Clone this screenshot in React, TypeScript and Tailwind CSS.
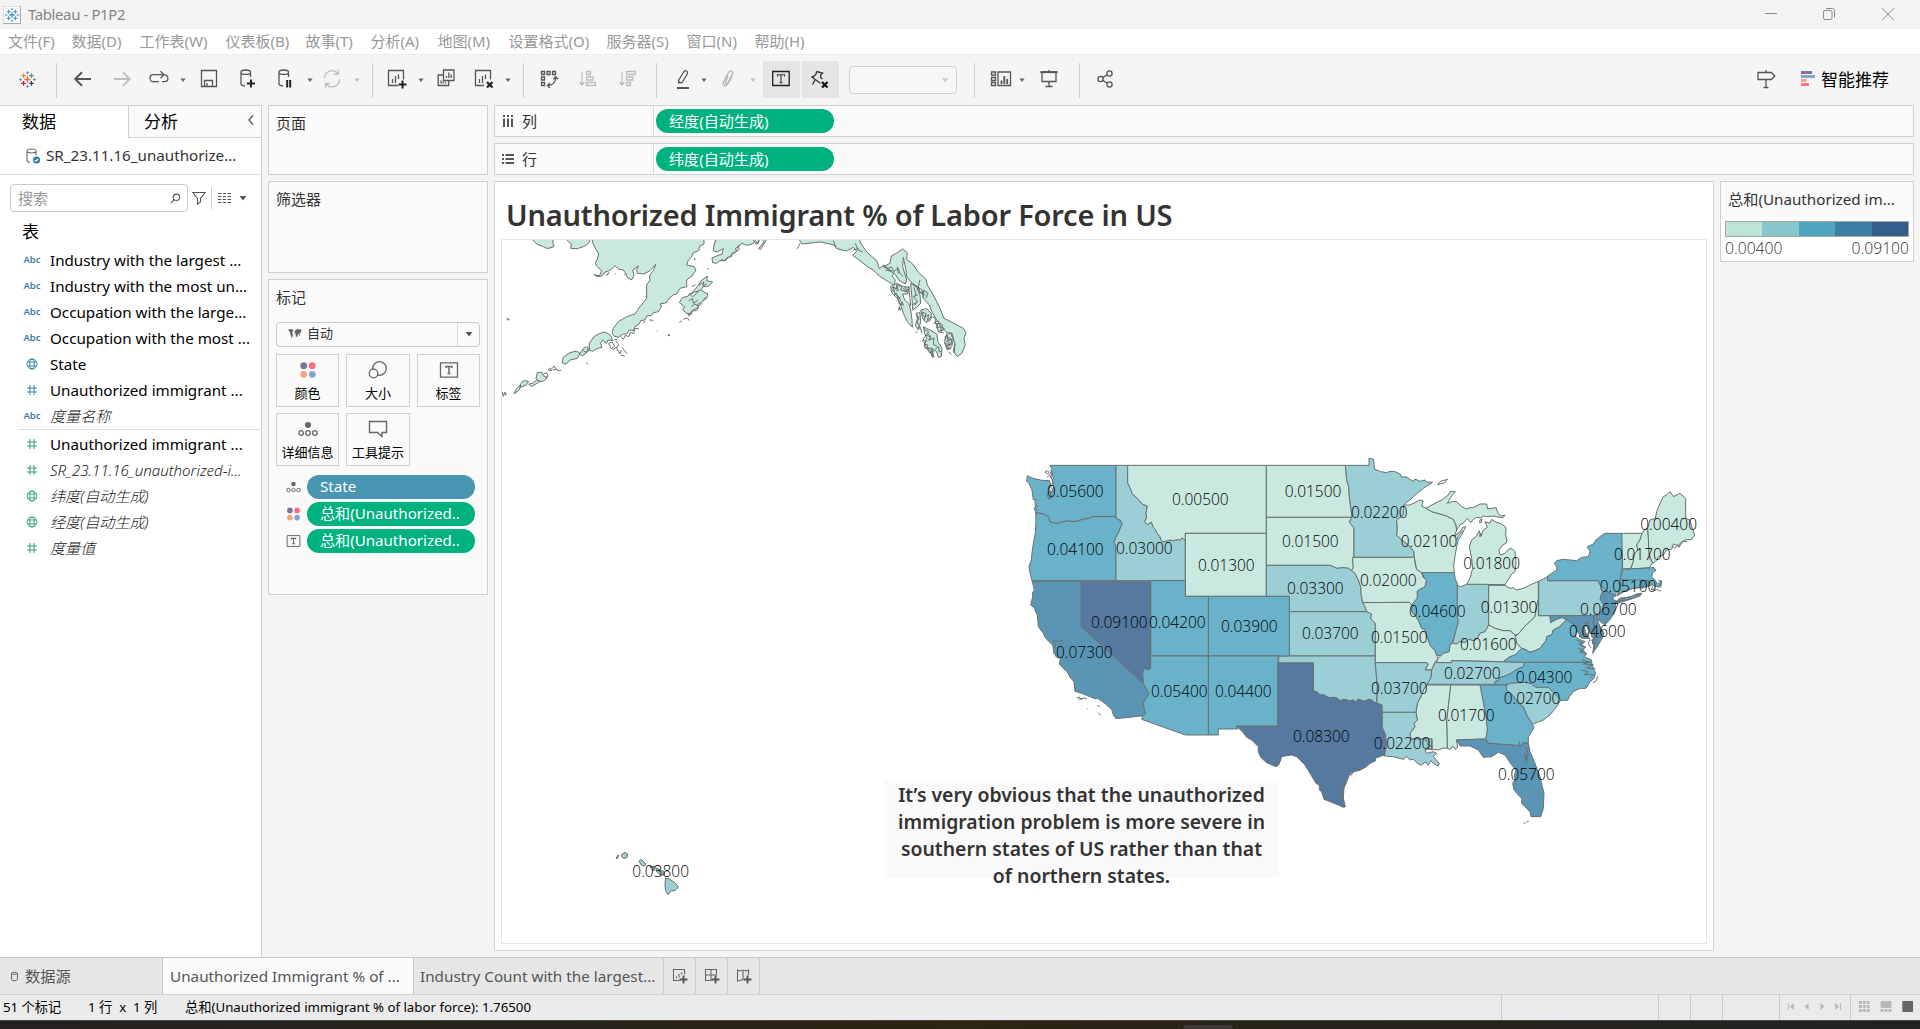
import React from "react";

type P = { children?: React.ReactNode; className?: string };

const Ico = ({ children, className = "" }: P) => (
  <svg viewBox="0 0 28 28" fill="none" stroke="#555" strokeWidth="1.3" className={"mb-0.5 h-7 w-7 shrink-0 " + className}>
    {children}
  </svg>
);

const Caret = ({ className = "" }: P) => (
  <svg viewBox="0 0 10 10" className={"h-2.5 w-2.5 shrink-0 " + className}>
    <path d="M2.4 3.5h5.2L5 7z" fill="currentColor" />
  </svg>
);

const Sep = ({ className = "" }: P) => <div className={"h-[35px] w-px shrink-0 bg-[#d0d0d0] " + className} />;

const Cylinder = () => (
  <path d="M17.5 12V7.2c0-1.2-2-2.2-4.8-2.2S8 6 8 7.2v11.6c0 1.2 1.6 2 4 2.2M8 7.4c0 1.2 2 2 4.7 2s4.8-.8 4.8-2" />
);

const menus: [string, string][] = [
  ["文件(F)", "w-[63.5px]"],
  ["数据(D)", "w-[68px]"],
  ["工作表(W)", "w-[86px]"],
  ["仪表板(B)", "w-[80px]"],
  ["故事(T)", "w-[65px]"],
  ["分析(A)", "w-[67px]"],
  ["地图(M)", "w-[71px]"],
  ["设置格式(O)", "w-[98px]"],
  ["服务器(S)", "w-[80px]"],
  ["窗口(N)", "w-[68px]"],
  ["帮助(H)", "w-[70px]"],
];

const TableauMark = ({ colors, className = "" }: { colors: string[]; className?: string }) => (
  <svg viewBox="0 0 24 24" fill="none" className={className}>
    <path d="M12 8v8M8 12h8" stroke={colors[0]} strokeWidth="1.9" />
    <path d="M7 4v6M4 7h6" stroke={colors[1]} strokeWidth="1.6" />
    <path d="M17 4v6M14 7h6" stroke={colors[2]} strokeWidth="1.6" />
    <path d="M7 14v6M4 17h6" stroke={colors[3]} strokeWidth="1.6" />
    <path d="M17 14v6M14 17h6" stroke={colors[4]} strokeWidth="1.6" />
    <path d="M12 1.2v4M10 3.2h4M12 18.8v4M10 20.8h4" stroke={colors[5]} strokeWidth="1.2" />
    <path d="M3.2 10v4M1.2 12h4M20.8 10v4M18.8 12h4" stroke={colors[6]} strokeWidth="1.2" />
  </svg>
);

function TitleBar() {
  return (
    <div className="flex h-[29px] shrink-0 items-center bg-[#f3f3f3] pl-[3px]">
      <div className="flex h-[18px] w-[18px] items-center justify-center border border-[#ddd] border-r-[#aaa] border-b-[#aaa] bg-[#f7fafc]">
        <TableauMark colors={["#4a90b8", "#4a90b8", "#4a90b8", "#4a90b8", "#4a90b8", "#5fa0c4", "#5fa0c4"]} className="h-4 w-4" />
      </div>
      <span className="ml-[7px] text-[15px] tracking-[-0.4px] text-[#858585]">Tableau - P1P2</span>
      <svg viewBox="0 0 156 29" fill="none" stroke="#8a8a8a" className="ml-auto h-[29px] w-[156px]">
        <path d="M1 13.5h12" />
        <rect x="59.5" y="10.5" width="8.5" height="9" rx="1.5" />
        <path d="M62 8.5h6.5a2 2 0 0 1 2 2v7" />
        <path d="M118 8.3l12 12M130 8.3l-12 12" />
      </svg>
    </div>
  );
}

function Toolbar() {
  return (
    <div className="flex h-[51px] shrink-0 items-center border-t border-[#ececec] bg-[#f5f5f5] pl-[13px] text-[#666]">
      <div className="mb-0.5 flex h-7 w-7 shrink-0 items-center justify-center">
        <TableauMark colors={["#e8762d", "#eb912c", "#5b879b", "#c72035", "#1f447e", "#7199a6", "#7099a6"]} className="h-[19px] w-[19px]" />
      </div>
      <Sep className="ml-[15px]" />
      <Ico className="ml-3"><path d="M22 14H6.500M13 7.200L6.200 14l6.800 6.800" strokeWidth="2" /></Ico>
      <Ico className="ml-[11px]"><path d="M6 14h15.500M15 7.200l6.800 6.800-6.800 6.800" stroke="#bdbdbd" strokeWidth="1.8" /></Ico>
      <Ico className="ml-[9px]"><path d="M14 16.700H8.500a3.500 3.500 0 0 1-3.500-3.500v-.7A3.500 3.500 0 0 1 8.500 9.700H18M15.500 6.200l3.500 3.500-3.500 3.500M17 16.700h2.500a3.400 3.400 0 0 0 0-6.800" /></Ico>
      <Caret className="ml-[5px]" />
      <Ico className="ml-[7px]"><path d="M6.500 5.500h15v16h-15zM9.500 21.500v-6h8v6M12 21v-3" /></Ico>
      <Ico className="ml-[10px]"><Cylinder /><path d="M18 14.500v8M14 18.500h8" stroke="#222" strokeWidth="2" /></Ico>
      <Ico className="ml-[10px]"><Cylinder /><path d="M16.200 15v7.500M19.200 15v7.500" stroke="#222" strokeWidth="2" /></Ico>
      <Caret className="ml-[6px]" />
      <Ico className="ml-[3px]"><path d="M6.500 13a7.600 7.600 0 0 1 13.500-4.500M21.500 14A7.600 7.600 0 0 1 8 19M20.500 4.500v4.500h-4.500M7.500 23v-4.500H12" stroke="#bdbdbd" /></Ico>
      <Caret className="ml-[6px] text-[#bbb]" />
      <Sep className="ml-[10px]" />
      <Ico className="ml-[10px]"><path d="M15 20.500H5.500v-15h15v9M9.500 18v-4M12.500 18v-7M15.500 14V9.500" /><path d="M19.500 15.500v8M15.500 19.500h8" stroke="#222" strokeWidth="2" /></Ico>
      <Caret className="ml-[5px]" />
      <Ico className="ml-[6px]"><path d="M11.500 5h10.500v10.500H11.500zM11.500 10H6.200v10.500h10.500V15.500M14.500 13v-2M16.800 13V7.500M19.200 13V9.500M9 18.500v-3M11.200 18.500v-2M13.500 18.500v-1.500" /></Ico>
      <Ico className="ml-[10px]"><path d="M14 20.500H5.500v-15h15v9M9.500 18v-4M12.500 18v-7M15.500 14V9.500" /><path d="M17 17l5.500 5.500M22.500 17L17 22.500" stroke="#222" strokeWidth="2.200" /></Ico>
      <Caret className="ml-[5px]" />
      <Sep className="ml-[10px]" />
      <Ico className="ml-[11px]"><path d="M6.500 6.500h3v3h-3zM12 6.500h3v3h-3zM17.500 6.500h3v3h-3zM6.500 12h3v3h-3zM6.500 17.500h3v3h-3zM12.500 20.500c5 0 8.200-3 8.200-8M18.300 14.200l2.400-2.400 2.300 2.400M15 18l-2.500 2.500 2.500 2.500" /></Ico>
      <Ico className="ml-[11px]"><path d="M8 7v12.500M5.500 17l2.500 3 2.500-3M12.500 6.500h4v3h-4zM12.500 12h6.500v3h-6.500zM12.500 17.500h9v3h-9z" stroke="#bdbdbd" /></Ico>
      <Ico className="ml-3"><path d="M8 7v12.500M5.500 17l2.500 3 2.500-3M12.500 6.500h9v3h-9zM12.500 12h6.500v3h-6.500zM12.500 17.500h4v3h-4z" stroke="#bdbdbd" /></Ico>
      <Sep className="ml-[14px]" />
      <Ico className="ml-3"><path d="M9.500 15.500L15 6.500q1-1.300 2.500-.5t1 2.500l-5.500 9-2 .5zM9 18.500l1-1.500" /><path d="M8 23h12" strokeWidth="2" /></Ico>
      <Caret className="ml-0.5" />
      <Ico className="ml-[6px]"><path d="M13 11l-2.500 6c-.6 2 1.600 2.500 2.300 1L17.500 9c1-3-2.500-4.500-4-1.500L8.500 17c-1.400 3 2.300 5.300 4.300 2L17 12" stroke="#b5b5b5" strokeWidth="1.300" /></Ico>
      <Caret className="ml-[5px] text-[#bbb]" />
      <div className="mb-px ml-[5px] flex h-[37px] w-[37px] shrink-0 items-center justify-center bg-[#e5e5e5]">
        <Ico className="mr-0.5"><path d="M5.700 6.500h16.500v14H5.700z" stroke="#222" /><path d="M10.500 11.500v-1.700h7v1.700M14 9.800v8M12.500 17.800h3" stroke="#333" strokeWidth="1.100" /></Ico>
      </div>
      <div className="mb-px ml-0.5 flex h-[37px] w-[37px] shrink-0 items-center justify-center bg-[#e5e5e5]">
        <Ico className="mr-px"><path d="M10.500 6.500l6 1.500-1.500 1.500-.5 3 2 1.500M10.500 6.500l-.3 2.200-3 3.300-1.800-.3 9 6.500M9 15l-2.500 4.500" stroke="#333" /><path d="M16 17l5.500 5.500M21.500 17L16 22.500" stroke="#111" strokeWidth="2.200" /></Ico>
      </div>
      <div className="ml-[10px] flex h-7 w-[108px] shrink-0 items-center justify-end rounded-sm border border-[#d0d0d0] bg-[#f7f7f7] pr-1.5">
        <Caret className="scale-125 text-[#c8c8c8]" />
      </div>
      <Sep className="ml-[17px]" />
      <Ico className="ml-3"><path d="M4.500 7h4v3h-4zM4.500 12.500h4v3h-4zM4.500 17.500h4v3h-4zM11 7h12.500v13.500H11z" /><path d="M14.500 19v-3.500M17.300 19v-8M20.200 19v-5" strokeWidth="1.800" /></Ico>
      <Caret className="ml-0.5" />
      <Ico className="ml-2"><path d="M5.500 7h17M14 5v1.500M7 7v9.500h14V7M14 16.500v5M10.500 21.500h7" /><path d="M5.500 7.200h17" strokeWidth="1.800" /></Ico>
      <Sep className="ml-4" />
      <Ico className="ml-[11px]"><circle cx="9.500" cy="14" r="2.600" /><circle cx="18.500" cy="8.500" r="2.600" /><circle cx="18.500" cy="19.500" r="2.600" /><path d="M11.700 12.600l4.600-2.800M11.700 15.400l4.600 2.800" /></Ico>
      <Ico className="ml-auto"><path d="M14 5v2M6 7.500h13.500l3.300 3.500-3.300 3.500H6zM14 14.500v8M11.500 22.500h5" /></Ico>
      <svg viewBox="0 0 14 16" className="mb-0.5 ml-[21px] h-4 w-[14px] shrink-0">
        <path d="M0 0h11v3H0z" fill="#84709b" />
        <path d="M0 4h14v3H0z" fill="#7fa5d0" />
        <path d="M0 8h5.500v3H0z" fill="#f5a57a" />
        <path d="M0 12h8v3H0z" fill="#fb7182" />
      </svg>
      <span className="mr-[31px] ml-[6px] text-[17px] text-black">智能推荐</span>
    </div>
  );
}

const Abc = () => <span className="text-[9.5px] font-semibold text-[#3d7f9f]">Abc</span>;
const Globe = ({ className = "" }: P) => (
  <svg viewBox="0 0 12 12" fill="none" stroke="currentColor" className={"h-3 w-3 " + className}>
    <circle cx="6" cy="6" r="5" />
    <ellipse cx="6" cy="6" rx="2.300" ry="5" />
    <path d="M1.500 4h9M1.500 8h9" />
  </svg>
);
const Hash = ({ className = "" }: P) => (
  <svg viewBox="0 0 12 12" fill="none" stroke="currentColor" strokeWidth="1.100" className={"h-3 w-3 " + className}>
    <path d="M4 1v10M8 1v10M1 4h10M1 8h10" />
  </svg>
);

const Field = ({ icon, label, italic = false }: { icon: React.ReactNode; label: string; italic?: boolean }) => (
  <div className="flex h-[26px] items-center whitespace-nowrap">
    <div className="flex w-16 shrink-0 justify-center">
      <div className="flex w-6 justify-center">{icon}</div>
    </div>
    <span className={"-ml-[14px] " + (italic ? "text-[15.100px] font-light text-[#222] italic" : "text-[15.200px] text-black")}>{label}</span>
  </div>
);

function DataPane() {
  const blue = "text-[#3d86a5]";
  const green = "text-[#3aa57e]";
  return (
    <div className="flex w-[262px] shrink-0 flex-col border-t border-r border-[#d0d0d0] bg-white">
      <div className="flex h-8 text-[17px] text-black">
        <div className="flex w-32 items-center pl-[22px]">数据</div>
        <div className="flex flex-1 items-center border-b border-l border-[#d0d0d0] bg-[#fafafa] pl-[15px]">
          分析
          <svg viewBox="0 0 8 12" fill="none" stroke="#555" strokeWidth="1.300" className="mr-[6px] mb-1 ml-auto h-3 w-2">
            <path d="M6 1.500L2 6l4 4.500" />
          </svg>
        </div>
      </div>
      <div className="flex h-[37px] items-center border-b border-[#ddd] pb-px pl-[24px]">
        <svg viewBox="0 0 18 18" fill="none" stroke="#666" strokeWidth="1.100" className="h-[18px] w-[18px]">
          <path d="M12 8V4c0-1-2-2-4.500-2S3 3 3 4v9.500c0 1 1 1.700 3 2M3 4.300c0 1 2 1.700 4.500 1.700S12 5.300 12 4.300" />
          <circle cx="12.500" cy="13" r="3.600" fill="#2f7ba6" stroke="none" />
          <path d="M10.800 13l1.300 1.300 2.200-2.400" stroke="white" />
        </svg>
        <span className="ml-1 text-[15.200px] whitespace-nowrap text-[#333]">SR_23.11.16_unauthorize...</span>
      </div>
      <div className="mt-[9px] flex h-[28px] items-center pl-[10px]">
        <div className="flex h-[28px] w-[178px] items-center rounded-sm border border-[#c8c8c8] pl-[7px] text-[15px] text-[#999]">
          搜索
          <svg viewBox="0 0 12 12" fill="none" stroke="#555" strokeWidth="1.200" className="mr-[6px] ml-auto h-[11px] w-[11px]">
            <circle cx="7" cy="4.700" r="3.500" />
            <path d="M4.500 7.200L1 11" />
          </svg>
        </div>
        <svg viewBox="0 0 14 14" fill="none" stroke="#555" strokeWidth="1.100" className="ml-[4px] h-[14px] w-[14px]">
          <path d="M.8 1.500h12.400L8.500 7.500v3.500l-3 2v-5.500z" />
        </svg>
        <div className="ml-[5px] h-[22px] w-px bg-[#d0d0d0]" />
        <svg viewBox="0 0 13 12" className="ml-[6px] h-3 w-[13px]" stroke="#555" strokeWidth="1.200">
          <path d="M0 1.500h3.500M5 1.500h3M9.500 1.500h3.500M0 4.500h3.500M5 4.500h3M9.500 4.500h3.500M0 7.500h3.500M5 7.500h3M9.500 7.500h3.500M0 10.500h3.500M5 10.500h3M9.500 10.500h3.500" />
        </svg>
        <Caret className="ml-[7px] scale-[1.300] text-[#555]" />
      </div>
      <div className="mt-[5px] flex h-[30px] items-center pb-px pl-[22px] text-[17px] text-black">表</div>
      <Field icon={<Abc />} label="Industry with the largest ..." />
      <Field icon={<Abc />} label="Industry with the most un..." />
      <Field icon={<Abc />} label="Occupation with the large..." />
      <Field icon={<Abc />} label="Occupation with the most ..." />
      <Field icon={<Globe className={blue} />} label="State" />
      <Field icon={<Hash className={blue} />} label="Unauthorized immigrant ..." />
      <Field icon={<Abc />} label="度量名称" italic />
      <div className="ml-[18px] h-px shrink-0 bg-[#ddd]" />
      <div className="mt-[1px] flex flex-col">
        <Field icon={<Hash className={green} />} label="Unauthorized immigrant ..." />
        <Field icon={<Hash className={green} />} label="SR_23.11.16_unauthorized-i..." italic />
        <Field icon={<Globe className={green} />} label="纬度(自动生成)" italic />
        <Field icon={<Globe className={green} />} label="经度(自动生成)" italic />
        <Field icon={<Hash className={green} />} label="度量值" italic />
      </div>
    </div>
  );
}

const Dots = () => (
  <svg viewBox="0 0 18 18" className="h-full w-full">
    <circle cx="4.700" cy="4.700" r="3.400" fill="#84709b" />
    <circle cx="13.300" cy="4.700" r="3.400" fill="#fb6f80" />
    <circle cx="4.700" cy="13.300" r="3.400" fill="#f5a57a" />
    <circle cx="13.300" cy="13.300" r="3.400" fill="#7fa5d0" />
  </svg>
);
const Detail = () => (
  <svg viewBox="0 0 20 16" fill="none" stroke="#666" strokeWidth="1.300" className="h-full w-full">
    <circle cx="10" cy="4" r="3" fill="#666" stroke="none" />
    <circle cx="3.200" cy="12" r="2.300" />
    <circle cx="10" cy="12" r="2.300" />
    <circle cx="16.800" cy="12" r="2.300" />
  </svg>
);
const TBox = () => (
  <svg viewBox="0 0 20 16" fill="none" stroke="#666" strokeWidth="1.300" className="h-full w-full">
    <path d="M1.500.8h17v14.400h-17z" />
    <path d="M7 6V4.500h6V6M10 4.500v7M8.500 11.500h3" strokeWidth="1.400" />
  </svg>
);

const MarkBtn = ({ label, children }: { label: string; children: React.ReactNode }) => (
  <div className="flex h-[53px] flex-col items-center border border-[#d0d0d0] bg-[#fafafa] pt-[6px]">
    <div className="flex h-[18px] w-5 items-center justify-center">{children}</div>
    <span className="mt-[4px] text-[13px] leading-[20px] whitespace-nowrap text-black">{label}</span>
  </div>
);

const pillGreen = "bg-[#00b180]";
const Pill = ({ children, className = "" }: P) => (
  <div className={"flex h-6 items-center rounded-full pl-[13px] text-[15.100px] whitespace-nowrap text-white " + className}>{children}</div>
);

function Cards() {
  return (
    <div className="ml-[6px] flex w-[220px] shrink-0 flex-col text-[15px] text-[#333]">
      <div className="h-[70px] border border-[#d0d0d0] bg-[#fafafa] pt-[6px] pl-[7px]">页面</div>
      <div className="mt-[6px] h-[92px] border border-[#d0d0d0] bg-[#fafafa] pt-[6px] pl-[7px]">筛选器</div>
      <div className="mt-[6px] h-[316px] border border-[#d0d0d0] bg-[#fafafa] px-[7px] pt-[6px]">
        标记
        <div className="mt-[13px] flex h-[25px] items-center rounded-sm border border-[#c8c8c8] text-[13px]">
          <svg viewBox="0 0 14 10" fill="#666" className="ml-[11px] h-2.5 w-3.5">
            <path d="M0 .5l4-.5 1.500 1.500L4 3.500 5 5.500 3.800 9.500 2.800 6.500 2 3.500zM7 1.500L9.500 0l4 .5-.5 3-1.500 1 .7 2.500-1-.5-1-2L9.200 8 8 7.500 7.500 4.500 6.500 4z" />
          </svg>
          <span className="ml-[5px]">自动</span>
          <div className="ml-auto flex h-full w-[22px] items-center justify-center border-l border-[#ddd] text-[#555]">
            <Caret className="scale-[1.300]" />
          </div>
        </div>
        <div className="mt-[7px] grid grid-cols-[63px_64px_63px] gap-x-[7px] gap-y-[6px]">
          <MarkBtn label="颜色"><div className="h-[18px] w-[18px]"><Dots /></div></MarkBtn>
          <MarkBtn label="大小">
            <svg viewBox="0 0 20 18" fill="none" stroke="#666" strokeWidth="1.300" className="h-[18px] w-5">
              <circle cx="11.500" cy="7.500" r="6.800" />
              <circle cx="5.500" cy="12.500" r="4.300" fill="#fafafa" />
            </svg>
          </MarkBtn>
          <MarkBtn label="标签"><div className="h-4 w-5"><TBox /></div></MarkBtn>
          <MarkBtn label="详细信息"><div className="h-4 w-5"><Detail /></div></MarkBtn>
          <MarkBtn label="工具提示">
            <svg viewBox="0 0 20 18" fill="none" stroke="#666" strokeWidth="1.400" className="h-[18px] w-5">
              <path d="M1.500 1.500h17v11h-4.500v4l-4.500-4h-8z" />
            </svg>
          </MarkBtn>
        </div>
        <div className="mt-[9px] grid grid-cols-[20px_168px] items-center gap-x-[2px] gap-y-[3px] pl-[9px]">
          <div className="ml-px h-3 w-[15px]"><Detail /></div>
          <Pill className="bg-[#4996b2]">State</Pill>
          <div className="ml-px h-4 w-[15px]"><Dots /></div>
          <Pill className={pillGreen}>总和(Unauthorized..</Pill>
          <div className="ml-px h-3 w-[15px]"><TBox /></div>
          <Pill className={pillGreen}>总和(Unauthorized..</Pill>
        </div>
      </div>
    </div>
  );
}

const c1 = "#c9e8df";
const c2 = "#9bced5";
const c3 = "#69b2c9";
const c4 = "#5b95b5";
const c5 = "#55799f";

// State outlines, in thirds of a pixel from the north-west corner of the contiguous map.
const states: [string, string][] = [
  [c3, "M52 107L62 112 70 115 95 121 118 122 122 132 118 148 126 158 131 140 127 125 130 112 122 100 126 88 120 76H318V230H250L235 235 220 238 195 245 170 243 155 247 140 250 120 246 115 230 100 222 77 218 73 205 79 195 74 188 78 180 70 180 66 150 57 130 50 124Z"],
  [c3, "M77 218L100 222 115 230 120 246 140 250 155 247 170 243 195 245 220 238 235 235 250 230H318L322 238 330 240 337 250 328 272 318 292 312 306 318 318V422H66L60 400 57 380 64 360 66 340 70 310 76 280 78 240Z"],
  [c2, "M318 76H353V128L362 148 366 160 385 178 398 193 412 198 408 220 410 232 404 245 412 254 424 246 430 262 436 268 440 278 450 290 452 298 458 306 470 303 480 300 490 302 505 298 510 301 516 293 520 296 526 303V422H318V318L312 306 318 292 328 272 337 250 330 240 322 238 318 230Z"],
  [c1, "M353 76H769V280H526V303L520 296 516 293 510 301 505 298 490 302 480 300 470 303 458 306 452 298 450 290 440 278 436 268 430 262 424 246 412 254 404 245 410 232 408 220 412 198 398 193 385 178 366 160 362 148 353 128Z"],
  [c1, "M526 280H769V469H526Z"],
  [c1, "M769 76H1006L1008 95 1010 120 1016 140 1018 170 1022 200 1026 232H769Z"],
  [c1, "M769 232H1026L1018 246 1032 264V352L1028 360 1030 380 1025 392 1015 385 1000 383 980 385 962 376H769Z"],
  [c2, "M769 376H962L980 385 1000 383 1015 385 1025 392 1035 400 1045 420 1052 440 1053 460 1058 488 1065 500 1070 515H838V469H769Z"],
  [c2, "M838 515H1070L1085 522 1082 535 1096 550V648H838Z"],
  [c2, "M806 648H1096V668L1102 740 1100 790 1093 787 1085 780 1075 778 1065 784 1045 778 1036 786 1030 780 1018 783 1005 778 990 782 980 774 970 772 960 774 950 770 940 764 930 766 924 758 910 752V669H806Z"],
  [c5, "M803 669H910V752L924 758 930 766 940 764 950 770 960 774 970 772 980 774 990 782 1005 778 1018 783 1030 780 1036 786 1045 778 1065 784 1075 778 1085 780 1093 787 1100 790 1116 794V862L1127 885V920L1123 945 1095 955 1097 962 1080 970 1070 980 1050 990 1030 993 1018 1005 1010 1025 1002 1045 1000 1075 1006 1100 1000 1102 985 1095 960 1085 942 1078 935 1055 928 1050V1036L918 1030 900 1000 885 975 870 960 860 950 845 945 830 947 815 950 812 960 806 975 798 980 770 968 752 952 745 935V920L725 900 710 892 700 878 679 858H803Z"],
  [c3, "M595 469H838V648H595Z"],
  [c3, "M422 422H526V469H595V648H422Z"],
  [c3, "M595 648H806L803 669V858H679L683 867H625V885H595Z"],
  [c4, "M66 424H214V560L400 730 408 745 418 763 408 775 400 790 403 808 407 822 395 828 318 836 310 825 305 808 290 795 275 783 262 775 255 776 235 768 215 760 195 754 192 725 180 712 172 695 165 690 148 672 152 655 140 652 132 640 128 615 115 603 105 592 100 580 85 560 82 525 75 512V505L62 495 68 470 67 460 73 450 68 430Z"],
  [c5, "M214 424H422V685L415 690 402 684 398 700 400 730 214 560Z"],
  [c3, "M422 648H595V885H526L395 838 398 828 407 822 403 808 400 790 408 775 418 763 408 745 400 730 398 700 402 684 415 690 422 685Z"],
  [c2, "M1006 76H1077V55L1090 57 1094 88 1112 95 1130 98 1140 94 1155 95 1172 103 1175 112 1188 110 1200 118 1210 124 1215 117 1230 124 1245 120 1250 126 1268 127 1240 145 1215 165 1200 180 1185 190 1182 195 1180 225 1160 240 1162 268 1160 285 1175 300 1195 315 1212 335 1213 352H1032V264L1018 246 1026 232 1022 200 1018 170 1016 140 1010 120 1008 95Z"],
  [c1, "M1028 352H1213L1216 375 1220 388 1235 398 1240 412 1250 420 1245 440 1222 453 1222 475 1210 488 1206 496 1198 487 1058 488 1053 460 1052 440 1045 420 1035 400 1025 392 1030 380 1028 360Z"],
  [c1, "M1058 488L1198 487 1206 496 1205 515 1218 530 1225 540 1235 565 1245 568 1252 590 1260 615 1275 632 1280 645 1284 655 1272 672 1265 690H1245L1255 672 1250 668H1096V550L1082 535 1085 522 1070 515 1065 500Z"],
  [c1, "M1182 195L1200 195 1230 180 1240 183 1235 198 1248 205 1265 215 1290 222 1310 228 1330 238 1338 255 1340 270 1333 290 1338 285 1350 275 1358 262 1367 260 1355 285 1345 300 1340 320 1335 350 1331 375 1333 399H1240L1235 398 1220 388 1213 352 1212 335 1195 315 1175 300 1160 285 1162 268 1160 240 1180 225Z"],
  [c1, "M1248 205L1265 195 1295 180 1312 168 1320 155 1336 155 1325 168 1312 190 1328 184 1340 185 1355 200 1370 207 1380 203 1390 203 1410 192 1430 192 1433 207 1458 203 1465 222 1475 228 1485 226 1478 234 1450 228 1430 230 1420 228 1412 234 1400 232 1390 238 1382 248 1372 235 1362 248 1350 255 1340 270 1338 255 1330 238 1310 228 1290 222 1265 215Z"],
  [c1, "M1425 245L1440 250 1445 238 1455 245 1475 252 1488 262 1487 285 1491 300 1488 310 1478 315 1467 330 1470 345 1485 340 1495 328 1505 325 1515 335 1518 370 1515 395 1505 402 1497 415 1485 434 1370 433 1380 415 1388 385 1385 355 1378 320 1385 300 1400 288 1408 272 1412 290 1420 270 1432 262Z"],
  [c3, "M1235 398H1333L1336 418 1342 430V530L1345 545 1337 575 1330 600 1320 615 1318 635 1300 640 1292 648 1280 645 1275 632 1260 615 1252 590 1245 568 1235 565 1225 540 1218 530 1205 515 1206 496 1210 488 1222 475 1222 453 1245 440 1250 420 1240 412Z"],
  [c2, "M1342 436L1352 440 1370 433H1436V555L1425 575 1410 580 1402 595 1390 602 1375 598 1366 608 1350 605 1340 612 1328 610 1337 575 1345 545 1342 530Z"],
  [c1, "M1436 436H1485L1500 445 1510 443 1520 450 1540 445 1560 435 1585 424V480L1580 500 1575 530 1560 545 1545 558 1535 570 1525 582 1515 585 1500 572 1480 572 1455 565 1436 555Z"],
  [c1, "M1585 480V527H1620L1622 548 1635 540 1655 532 1672 540 1658 550 1650 560 1630 570 1625 585 1610 590 1608 602 1590 625 1575 632 1560 637 1545 628 1535 625 1520 610 1515 590 1525 582 1535 570 1545 558 1560 545 1575 530 1580 500Z"],
  [c1, "M1280 668H1325V662L1480 665 1500 650 1515 645 1535 625 1520 610 1515 585 1500 572 1480 572 1455 565 1436 555 1425 575 1410 580 1402 595 1390 602 1375 598 1366 608 1350 605 1340 612 1328 610 1320 615 1318 635 1300 640 1292 648 1284 655Z"],
  [c2, "M1275 668H1325V662L1545 667 1538 682 1525 686 1515 692 1500 702 1480 710 1470 712 1465 722 1455 725 1453 733H1250L1262 715 1265 690Z"],
  [c3, "M1480 665L1500 650 1515 645 1535 625 1545 628 1560 637 1575 632 1590 625 1608 602 1610 590 1625 585 1630 570 1650 560 1658 550 1672 540 1690 552 1700 570 1695 590 1712 600 1726 605 1712 612 1728 622 1714 630 1730 640 1722 650 1745 660V667L1545 667Z"],
  [c3, "M1545 667H1745L1750 685 1757 700 1752 715 1740 725 1728 745 1710 745 1690 755 1678 770 1673 781H1652L1615 743H1577L1565 732 1545 727 1500 730 1485 735H1453L1455 725 1465 722 1470 712 1480 710 1500 702 1515 692 1525 686 1538 682Z"],
  [c2, "M1488 738L1500 730 1545 727 1565 732 1577 742H1615L1652 780 1640 800 1620 825 1600 840 1580 848 1567 853 1550 825 1540 800 1525 790 1510 768 1490 750Z"],
  [c3, "M1410 735H1488L1490 750 1510 768 1525 790 1540 800 1550 825 1567 853 1572 862 1565 875 1555 890V910L1540 908 1535 918 1435 910 1427 895 1432 870 1428 830Z"],
  [c1, "M1322 735H1410L1428 830 1432 870 1427 897 1339 900 1343 922 1335 928 1328 918 1322 928 1312 925 1310 840Z"],
  [c1, "M1250 735H1322L1310 840 1312 925 1300 924 1285 930 1266 928V897H1203L1200 880 1215 860 1212 850 1222 840 1218 817 1222 790 1235 765 1240 750Z"],
  [c2, "M1096 668H1250L1255 672 1245 690H1265L1262 715 1250 735 1240 750 1235 765 1222 790 1218 817H1117L1116 794 1101 790 1102 740Z"],
  [c2, "M1117 817H1218L1222 840 1212 850 1215 860 1200 880 1203 897H1265L1266 925 1245 930 1250 940 1270 935 1280 940 1270 950 1288 970 1285 978 1270 970 1262 962 1255 975 1245 966 1235 975 1225 972 1210 958 1200 960 1190 950 1180 958 1150 950 1123 948 1130 920 1127 885 1117 862Z"],
  [c4, "M1340 900L1427 897 1435 910 1520 916 1535 918 1540 908 1555 910 1560 935 1575 970 1590 1010 1602 1060 1600 1105 1592 1130 1563 1130 1560 1115 1545 1100 1535 1090V1075L1525 1065 1512 1050 1508 1030 1518 1015 1512 1010 1518 990 1505 975 1485 945 1465 937 1445 950 1420 952 1405 930 1380 918 1350 918Z"],
  [c2, "M1586 424L1613 410V422H1765L1770 435 1788 450 1775 462 1772 475 1785 495 1775 510 1765 520 1750 527H1586Z"],
  [c3, "M1613 422V408L1640 390V380L1633 370 1640 362 1660 358 1680 360 1700 362 1715 352 1735 350 1740 335 1732 320 1750 312 1758 300 1770 290 1785 280H1835L1838 320 1837 385 1830 420 1833 445 1818 460 1816 470 1805 462 1788 452 1770 435 1765 422Z"],
  [c3, "M1815 488L1830 474 1860 472 1880 462 1895 460 1890 468 1860 478 1830 488Z"],
  [c1, "M1835 280H1896L1890 300 1880 315 1884 330 1870 345V365L1862 385 1838 387 1837 330Z"],
  [c1, "M1896 280L1905 268 1913 265 1915 290 1917 340 1920 358 1928 368 1918 383 1862 387 1870 365V345L1884 330 1880 315 1890 300Z"],
  [c1, "M1913 265L1920 240 1936 235 1940 215 1948 195 1960 170 1970 165 1980 155 1990 170 2010 160 2027 175V235L2040 240 2045 260 2054 285 2045 298 2025 300 2012 308 2005 318 1990 312 1985 328 1970 330 1960 345 1945 350 1940 362 1928 370 1917 340 1915 290Z"],
  [c3, "M1838 388L1920 384 1930 382 1938 390 1928 398 1925 410 1935 420 1942 432 1955 422 1950 438 1935 440 1925 432 1915 424 1830 420Z"],
  [c3, "M1830 420H1893L1895 442 1870 445 1850 450 1820 468 1833 440Z"],
  [c4, "M1893 421H1915L1922 436 1910 440 1895 445Z"],
  [c4, "M1785 452L1813 465 1808 478 1817 482 1815 510 1803 535 1785 555 1765 540 1770 520 1785 500 1770 478 1775 460Z"],
  [c4, "M1620 527H1750L1755 595 1745 590 1740 570 1732 560 1738 548 1728 550 1722 570 1738 595 1715 595 1700 570 1690 552 1672 540 1655 532 1635 540 1622 548Z"],
  [c4, "M1750 527L1765 523 1762 540 1772 565 1782 578 1778 592H1755Z"],
  [c4, "M1755 592H1778L1765 615 1748 640 1752 615 1745 600Z"],
];

// Small islands, inlets and ragged shores drawn as strokes only.
const shoreLines =
  "M105 96l8-4 5 6-6 4zM112 110l8-6 2 10M122 90l7 12-5 12 6 14-8 12 7 12-9 8 6 12-8 6M110 165l8-10 6 12-6 10zM74 195l8 4-6 6 6 8M128 602l8-2 4 4 20-3M130 600l8 22M200 774l8-3 4 5 8-2 10 2M205 777l12 1M262 796l8 5M264 818l8 8M231 805l3 3M1283 134l8-10 22-6-10 10zM1333 290l12-12M1410 240l6-3-2 10-5 2zM1340 300l6-14 12-14M1408 290l4-10 4 8M1000 1070l-10 2 8-30 10-26 14-18 30-8M995 1050l4 30M1018 998l6 8 6-12M1236 398l6 14M1245 902l14 4-8 6 12 6-10 6 14 6M1265 900v30M1530 915l-4-12M1548 920l6 20-4 20-6-20 6 30M1512 1012l8 6-8 10M1541 1150l6-2M1550 1146l6-3M1700 600l20 10-14 2 18 10M1705 625l18 6-14 4 20 8M1736 540l-6 20 8 16-8 6 10 18-6 12 10 12M1722 545l8 8-12 8 10 10-12 6 14 10M1716 660l22 6-18 6 30 2-20 10 26 2M1715 690l20 6-12 8 28 0-10 10M1762 708l-2 14-12 6M1755 592l-8 20 10-8-6 26M1945 420l10 4-2 16-10 2M1920 430l8 10-4 10 12-4M1930 452l14-4M1945 452h8M1985 318l10 6 8-10 4 8 10-16 14-2M1825 462l20-10 30-8 24-2M1815 486l30-12 50-14-30 16z";

const labels: [string, number, number][] = [
  ["0.05600", 196, 155], ["0.04100", 196, 329], ["0.03000", 403, 326], ["0.00500", 571, 179],
  ["0.01300", 649, 377], ["0.01500", 909, 155], ["0.01500", 901, 305], ["0.03300", 916, 446],
  ["0.03700", 961, 581], ["0.09100", 328, 548], ["0.04200", 502, 548], ["0.03900", 718, 560],
  ["0.07300", 223, 638], ["0.05400", 508, 755], ["0.04400", 700, 755], ["0.08300", 934, 890],
  ["0.02200", 1108, 217], ["0.02100", 1257, 304], ["0.01800", 1445, 371], ["0.02000", 1135, 422],
  ["0.04600", 1282, 514], ["0.01300", 1497, 502], ["0.01500", 1168, 592], ["0.01600", 1435, 614],
  ["0.00400", 1976, 254], ["0.01700", 1897, 344], ["0.05100", 1854, 440], ["0.06700", 1795, 509],
  ["0.04600", 1762, 575], ["0.02700", 1387, 701], ["0.04300", 1602, 713], ["0.03700", 1168, 746],
  ["0.02700", 1566, 777], ["0.01700", 1369, 827], ["0.02200", 1176, 911], ["0.05700", 1549, 1005],
  ["0.03800", -1048, 1295],
];

const alaska = [
  "M308 200V218L316 235 326 252 322 268 316 280 322 290 335 303 328 318 312 314 322 320 336 318 345 306 355 303 365 297 374 287 385 297 400 300 408 312 412 322 424 330 432 318 430 308 428 300 445 288 440 300 442 310 462 312 480 302 497 283 490 302 478 318 480 330 470 345 470 385 460 398 450 410 435 432 410 440 385 455 370 475 366 488 372 498 384 502 400 492 410 492 418 480 430 482 436 468 448 462 452 452 465 450 470 438 485 436 490 428 505 425 515 408 510 402 530 398 534 388 550 375 560 372 570 355 590 350 590 330 606 318 618 300 612 290 590 285 595 270 604 262 610 248 626 242 630 228 642 222V200Z",
  "M128 200V210L140 222 160 230 172 236 192 230 188 216 192 200Z",
  "M230 200L232 212 244 222 242 235 262 236 280 230 296 220 304 200Z",
  "M680 200L672 225 670 242 682 246 700 236 696 252 680 258 666 264 668 278 680 280 690 272 705 272 716 262 728 252 748 238 744 228 756 220 770 226 788 222 796 212 804 222 810 200Z",
  "M812 200L822 215 806 236 812 238 832 205Z",
  "M922 200L936 222 990 216 1030 224 1040 236 1070 243 1090 232 1100 244 1088 256 1110 272 1135 292 1150 300 1168 318 1190 332 1212 346 1216 330 1206 318 1212 310 1196 300 1188 290 1180 286 1168 296 1160 272 1130 246 1118 228 1110 215V200Z",
  "M1180 290L1200 280 1204 258 1222 248 1238 237 1252 248 1250 268 1268 282 1286 308 1308 328 1312 345 1330 375 1350 415 1362 445 1382 455 1420 475 1428 488 1422 505 1426 525 1415 550 1402 560 1390 545 1394 520 1386 490 1370 488 1355 470 1340 450 1326 426 1318 405 1300 385 1296 360 1282 350 1262 335 1250 320 1248 300 1240 262 1238 290 1250 330 1246 342 1226 330 1215 312 1200 300Z",
  "M1202 350L1220 340 1240 350 1258 352 1252 372 1238 372 1244 390 1256 400 1262 420 1266 450 1267 472 1252 455 1240 430 1234 410 1222 385 1205 368Z",
  "M1262 340L1280 350 1290 375 1292 400 1280 412 1268 420 1266 385Z",
  "M1278 430L1290 428 1292 455 1286 480 1276 465 1284 450Z",
  "M1292 420L1310 416 1324 430 1322 450 1308 458 1298 445Z",
  "M1300 470L1320 480 1340 492 1344 515 1356 535 1354 560 1345 562 1340 545 1325 535 1332 562 1318 545 1302 525 1310 505 1304 490Z",
  "M1338 460L1355 462 1360 480 1345 485Z",
  "M1366 500L1382 488 1390 510 1385 530 1372 540 1364 520Z",
  "M568 398L578 382 592 380 600 370 608 380 620 370 628 356 645 368 654 372 650 385 632 398 622 404 626 412 606 422 598 436 588 428 578 420 584 410Z",
  "M598 375L612 362 622 350 636 330 652 318 650 332 668 336 656 348 640 350 630 362 614 366Z",
  "M298 540L298 520 312 500 330 490 345 486 362 496 368 512 354 510 350 520 338 510 332 520 336 532 320 536 308 544Z",
  "M216 578L220 562 240 548 260 543 270 550 262 565 240 570 228 583Z",
  "M270 550L280 535 292 530 298 540 288 550 276 558Z",
  "M138 625L142 608 155 606 160 618 172 622 160 634 146 634Z",
  "M72 672L80 655 92 645 88 660ZM90 645L100 632 116 634 108 645 92 652Z",
  "M116 642L128 640 140 630 150 634 138 642 124 650Z",
];

const alaskaLines =
  "M36 665l4 14 4-12 4 10M44 670h6M50 446l8 2-2 3zM160 612l10-4 4 10-8 8M174 600l8-6 2 8zM186 596l6-8 8 10-12 2M200 600l8 2 6-2M288 578l6 5M278 540l10 8 6-12M356 520l10-4 8 12-10 8zM366 540l14-8 2 10M378 512l8 12-6 10M384 540l6 12 4-12M392 556l12 2M396 532l8 10 8 10M372 510l10-2M392 500l8 8 6-12 10 4 4-12 12 2 2-14 12 0M460 460l4-6M478 450l12 1M500 483l2 1M534 494l6 2-4 2zM568 458l8-6M580 448l12-4 6 8M596 440l8-12M652 296l4 0M612 264l4 4-4 2M606 350l10-6M626 346l16-10-4 12 12-6M596 392l12-6 2 14 14-10M604 410l10-8 10 6 12-8M640 388l8-6M590 430l14 2 4-10 12 0 6-12M320 316l10 2M350 318l8-12M376 310l2 3M402 315l3-3M750 226l-14 10 4 8-14 6-2 10-12 2-8 10-10-4M790 210l10 14 8-12M930 220l-8 16M1030 212l8 20M1096 220l8 20 14 6M1090 240l16-4M1180 285l14 10 10-4 8 14 10-10 4 16M1186 300l20 4M1222 290l8 20 10 10M1206 352l14 4 0-12 16 6-4 10 20 6-8-18M1214 372l12 8 6 14M1226 400l14 6-4-10M1228 412l4 10M1256 348l6 60M1270 345l18 10-2 12 20 8M1290 330l-8 30M1300 360l14 10-6 14M1270 380l14-6M1266 405l18-10M1276 490l6-6M1290 470l6 20M1284 440l-6 20M1294 425l14 6-6 20M1322 440l14 4 0 18M1330 460l14-8 8 18 12 6M1345 485l16 4M1298 510l12 4-8 8 12 4-4 10 14-2 0 14 12-8M1312 490l10 8-4 12 14-6-2 20 12 4M1320 545l8 18M1368 500l14 6-12 8 14 8-12 8 10 8M1376 545l8 8M1364 520l16 4M1395 520l-2 30M1370 490l-4 20M1204 356l10 12-4-18 14 14-2-16M1210 374l10-4 4 16 8-6M1224 392l8 14 4-12M1228 408l-2 12 10-6M1240 354l8 12 6-10M1272 352l6 20-6 10 10 12-8 12M1284 352l8 16 10-6-4 22M1280 434l8 12-8 8 8 14-6 10M1296 428l8 14 12-8-4 18 10-10M1302 476l14 10-8 10 14 4-6 12M1304 500l-6 14 10 10-4 10 12 0 2 14 10-4 0 14M1336 536l10-6 2 16 8-2M1344 462l-4 12 12-4 2 14 8-6M1372 496l2 16 12-4-4 16-14 2 6 12 10-4";

const hawaii = [
  "M622 854l3-1.500 2.500 1.500-.5 3.500-3 1-2.500-2z",
  "M616 858.500l2-3.500.8.500-1.500 3z",
  "M639 861l2-1.500 2.500 2 2.500 2.500-1.500 2-3-.5z",
  "M650 866.500h5.500v1l-5 .3zM652 869l2.500-.5.5 1.500-2 .8zM656 868l3 1.500 5 2 .5 3-4 1-2-2.500-2-1.500z",
  "M665.500 878l4 1 5.500 4 3.500 4-3.500 3.500-4 .5-3 3.500-2.500-4-.5-5z",
];

function MapView() {
  return (
    <svg viewBox="502 240 1204 703" className="block h-full w-full" stroke="#687172" strokeWidth="1" strokeLinejoin="round">
      <g transform="translate(490 170) scale(.33333)" fill={c1}>
        {alaska.map((d, i) => (
          <path key={i} d={d} vectorEffect="non-scaling-stroke" />
        ))}
        <path d={alaskaLines} fill="none" vectorEffect="non-scaling-stroke" />
      </g>
      <g fill={c2}>
        {hawaii.map((d, i) => (
          <path key={i} d={d} />
        ))}
      </g>
      <g transform="translate(1010 440) scale(.33333)">
        {states.map(([fill, d], i) => (
          <path key={i} d={d} fill={fill} vectorEffect="non-scaling-stroke" />
        ))}
        <path d={shoreLines} fill="none" vectorEffect="non-scaling-stroke" />
        {labels.map(([t, x, y], i) => (
          <text key={i} x={x} y={y + 16} textAnchor="middle" fill="#000" stroke="none" fontSize="46.500" className="font-[Open_Sans] font-[360]">
            {t}
          </text>
        ))}
      </g>
    </svg>
  );
}

const Shelf = ({ icon, name, label, className = "" }: { icon: React.ReactNode; name: string; label: string; className?: string }) => (
  <div className={"flex h-8 shrink-0 items-center border border-[#d0d0d0] bg-[#fafafa] text-[15px] text-[#333] " + className}>
    <div className="flex h-full w-[159px] items-center border-r border-[#d8d8d8] pl-[7px]">
      {icon}
      <span className="ml-[8px]">{name}</span>
    </div>
    <Pill className={"ml-0.5 w-[178px] " + pillGreen}>{label}</Pill>
  </div>
);

function Main() {
  return (
    <div className="ml-[6px] flex w-[1420px] flex-col">
      <Shelf
        name="列"
        label="经度(自动生成)"
        icon={<svg viewBox="0 0 12 12" className="mb-px h-3 w-3" stroke="#555" strokeWidth="2"><path d="M2 0v2M6 0v2M10 0v2M2 3.500V12M6 3.500V12M10 3.500V12" /></svg>}
      />
      <Shelf
        name="行"
        label="纬度(自动生成)"
        className="mt-[6px]"
        icon={<svg viewBox="0 0 12 12" className="mb-px h-3 w-3" stroke="#555" strokeWidth="2"><path d="M0 2h2M0 6h2M0 10h2M3.500 2H12M3.500 6H12M3.500 10H12" /></svg>}
      />
      <div className="mt-[6px] flex items-start">
        <div className="flex h-[770px] w-[1220px] flex-col border border-[#d0d0d0] bg-white px-[6px] pb-[6px]">
          <div className="flex h-[57px] items-end pb-[3px] pl-[5px]">
            <span className="text-[29px] leading-[42px] font-semibold tracking-[-0.2px] whitespace-nowrap text-[#333]">Unauthorized Immigrant % of Labor Force in US</span>
          </div>
          <div className="relative min-h-0 flex-1 border border-[#e4e4e4]">
            <MapView />
            <div className="absolute top-[541px] left-[382px] h-[97px] w-[395px] bg-[#fafafa] text-center text-[19.400px] leading-[27px] font-semibold whitespace-nowrap text-[#333]">
              It’s very obvious that the unauthorized
              <br />
              immigration problem is more severe in
              <br />
              southern states of US rather than that
              <br />
              of northern states.
            </div>
          </div>
        </div>
        <div className="ml-[6px] h-[81px] w-[194px] border border-[#d0d0d0] bg-white text-[15.200px] text-[#333]">
          <div className="flex h-[35px] items-center bg-[#fafafa] pl-[7px] whitespace-nowrap">总和(Unauthorized im...</div>
          <div className="mx-1 mt-[4px] flex h-4 border border-[#aaa69a]">
            <div className="flex-1 bg-[#bce5d8]" />
            <div className="flex-1 bg-[#86c6cc]" />
            <div className="flex-1 bg-[#4ea5bf]" />
            <div className="flex-1 bg-[#3c7fa5]" />
            <div className="flex-1 bg-[#345f8b]" />
          </div>
          <div className="mx-1 flex justify-between font-[Open_Sans] text-[15.700px] leading-[23px] font-[360]">
            <span>0.00400</span>
            <span>0.09100</span>
          </div>
        </div>
      </div>
    </div>
  );
}

const AddBtn = ({ children }: P) => (
  <div className="flex w-8 items-center justify-center border-r border-[#c9c9c9]">
    <svg viewBox="0 0 18 18" fill="none" stroke="#666" strokeWidth="1.100" className="h-[18px] w-[18px]">
      {children}
      <path d="M12.500 8.500v8M8.500 12.500h8" stroke="#555" strokeWidth="1.900" />
    </svg>
  </div>
);

function Bottom() {
  return (
    <>
      <div className="flex h-[37px] shrink-0 border-t border-[#c9c9c9] bg-[#e6e6e6] text-[15.250px] whitespace-nowrap text-[#555]">
        <div className="flex w-[163px] items-center border-r border-[#c9c9c9] pl-[10px]">
          <svg viewBox="0 0 8 12" fill="none" stroke="#555" className="h-[11px] w-[9px]">
            <path d="M.8 2.500v7C.8 11 7.200 11 7.200 9.500v-7C7.200 1 .8 1 .8 2.500C.8 4 7.200 4 7.200 2.500" />
          </svg>
          <span className="ml-[6px]">数据源</span>
        </div>
        <div className="flex w-[251px] items-center border-r border-[#c9c9c9] bg-[#fafafa] pl-[7px]">Unauthorized Immigrant % of ...</div>
        <div className="flex w-[250px] items-center border-r border-[#c9c9c9] pl-[6px]">Industry Count with the largest...</div>
        <AddBtn><path d="M8.500 13.500h-6v-11h11v5M5.500 11.500V9.500M8 10.500V7M10.500 7.500V5.500" /></AddBtn>
        <AddBtn><path d="M8.500 13.500h-6v-11h11v5M8 2.500v11M2.500 8h11" /></AddBtn>
        <AddBtn><path d="M8 12.500l-5.500 1.500v-11L5 4l3-1 3 1 2.500-1v5M8 4v8" /></AddBtn>
      </div>
      <div className="flex h-[26px] shrink-0 border-t border-[#d0d0d0] bg-[#ebebeb] text-[13.250px] whitespace-pre text-black">
        <div className="flex flex-1 items-center pl-[3px]">
          <span className="w-[85px]">51 个标记</span>
          <span className="w-[97px]">1 行  x  1 列</span>
          <span>总和(Unauthorized immigrant % of labor force): 1.76500</span>
        </div>
        <div className="w-[157px] border-l border-[#c9c9c9]" />
        <div className="w-[32px] border-l border-[#c9c9c9]" />
        <div className="w-[32px] border-l border-[#c9c9c9]" />
        <div className="w-[57px] border-l border-[#c9c9c9]" />
        <svg viewBox="0 0 71 25" className="w-[71px] border-l border-[#c9c9c9]" fill="#b8b8b8">
          <path d="M8 8h1v7H8zM14 8v7l-4-3.500zM29 8v7l-4-3.500zM41 8v7l4-3.500zM56 8v7l4-3.500zM61 8h1v7h-1z" />
        </svg>
        <svg viewBox="0 0 70 25" className="w-[70px] border-l border-[#c9c9c9]" fill="#b8b8b8">
          <path d="M8 6h3v3H8zM12 6h3v3h-3zM16 6h3v3h-3zM8 10h3v3H8zM12 10h3v3h-3zM16 10h3v3h-3zM8 14h3v3H8zM12 14h3v3h-3zM16 14h3v3h-3zM30 6h11v7H30zM30 14h3v3h-3zM34 14h3v3h-3zM38 14h3v3h-3z" />
          <rect x="52" y="6" width="11" height="11" rx=".8" fill="#666" />
        </svg>
      </div>
      <div className="flex h-[9px] shrink-0 items-end border-t border-[#454545] bg-linear-to-r from-[#242020] via-[#2b2513] to-[#222122]">
        <div className="ml-[1183px] h-[4px] w-[50px] rounded-t bg-[#3c3936]" />
      </div>
    </>
  );
}

export default function App() {
  return (
    <div className="flex h-[1029px] w-[1920px] flex-col overflow-hidden bg-[#f4f4f4] font-['Noto_Sans','Noto_Sans_CJK_SC',sans-serif]">
      <TitleBar />
      <div className="flex h-[25px] shrink-0 items-center bg-white pl-2 text-[15px] whitespace-nowrap text-[#999]">
        {menus.map(([m, w]) => (
          <div key={m} className={w}>{m}</div>
        ))}
      </div>
      <Toolbar />
      <div className="flex h-[852px] shrink-0">
        <DataPane />
        <Cards />
        <Main />
      </div>
      <Bottom />
    </div>
  );
}
